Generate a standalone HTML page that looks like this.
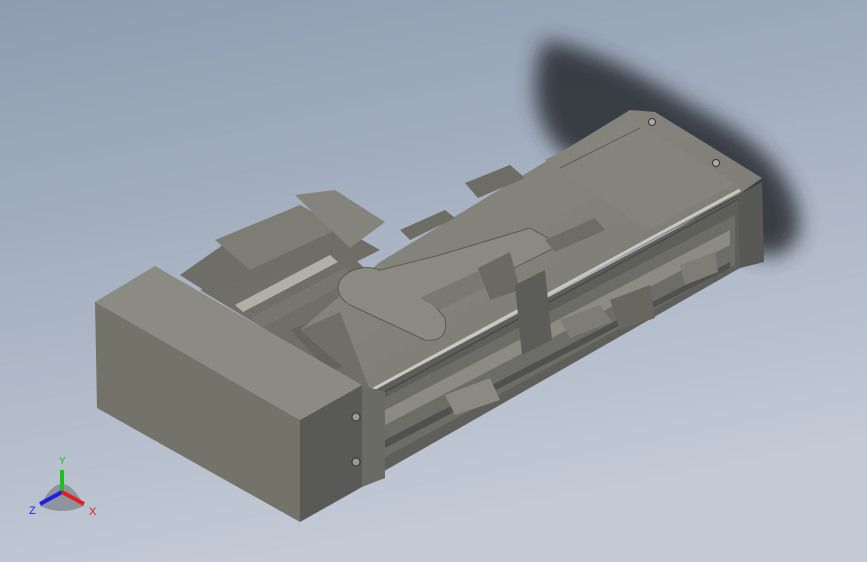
<!DOCTYPE html>
<html><head><meta charset="utf-8"><style>
html,body{margin:0;padding:0;width:867px;height:562px;overflow:hidden}
svg{display:block}
</style></head><body>
<svg width="867" height="562" viewBox="0 0 867 562" xmlns="http://www.w3.org/2000/svg">
<defs>
<linearGradient id="bg" x1="0" y1="0" x2="0.3" y2="1">
<stop offset="0" stop-color="#8d9cb0"/><stop offset="1" stop-color="#c3cad6"/>
</linearGradient>
<filter id="blur"><feGaussianBlur stdDeviation="10"/></filter>
<linearGradient id="top" x1="0" y1="0" x2="1" y2="1">
<stop offset="0" stop-color="#8a8981"/><stop offset="1" stop-color="#7a7971"/>
</linearGradient>
</defs>
<rect width="867" height="562" fill="url(#bg)"/>
<path d="M545,40 C600,50 650,80 700,110 C760,140 800,180 800,230 C790,260 770,260 740,250 L560,150 C530,120 530,70 545,40Z" fill="#2e3137" filter="url(#blur)" opacity="0.9"/>
<polygon points="365,395 740,195 762,200 762,262 740,268 372,478" fill="#5e5e5a"/>
<polygon points="380,400 735,215 735,265 380,460" fill="#6d6d67"/>
<polygon points="385,410 730,230 730,245 385,425" fill="#8b8b84"/>
<polygon points="385,440 730,262 730,268 385,448" fill="#505050"/>
<polygon points="180,275 230,240 300,205 380,250 340,270 290,345" fill="#6e6d66"/>
<!-- recess between box and body -->
<polygon points="200,290 350,255 400,300 370,392 250,320" fill="#6f6e67"/>
<polygon points="290,330 340,310 360,360 330,372" fill="#64635d"/>
<polygon points="300,330 380,262 540,165 630,110 655,112 762,178 738,195 370,390" fill="url(#top)"/>
<polygon points="300,330 340,312 370,390" fill="#6f6e67"/>
<polygon points="545,160 630,118 735,183 648,230" fill="#85847c"/>
<polyline points="560,168 640,128" stroke="#5c5c57" stroke-width="1" fill="none"/>
<polyline points="368,392 740,190" stroke="#c8c8c0" stroke-width="3" fill="none"/>
<polyline points="370,400 740,198" stroke="#4a4a46" stroke-width="1.5" fill="none"/>
<polygon points="215,240 300,205 340,228 250,270" fill="#7e7d75"/>
<polygon points="295,195 335,190 385,222 350,248" fill="#85847c"/>
<polygon points="235,305 330,255 338,262 243,312" fill="#b0b0a8"/>
<polygon points="250,318 345,268 355,278 262,328" fill="#76756e"/>
<path d="M340,280 C350,268 365,265 380,270 L440,255 L530,228 L560,245 L480,285 L430,300 L445,318 C448,335 440,342 425,340 L350,305 C338,298 336,288 340,280Z" fill="#8b8a82" stroke="#5a5a55" stroke-width="1"/>
<polygon points="420,298 480,270 500,280 440,310" fill="#7a7971"/>
<polygon points="400,230 445,210 455,218 410,240" fill="#6d6c65"/>
<polygon points="465,183 510,165 525,178 478,198" fill="#6d6c65"/>
<polygon points="545,240 595,218 605,230 555,252" fill="#6d6c65"/>
<polygon points="478,268 510,252 520,290 490,300" fill="#6a6963"/>
<polygon points="515,285 545,270 552,340 522,355" fill="#5c5c58"/>
<polygon points="445,395 490,378 500,400 455,415" fill="#8a8982"/>
<polygon points="560,320 600,305 612,322 570,338" fill="#7d7c75"/>
<polygon points="680,265 715,252 718,272 685,285" fill="#7d7c75"/>
<polygon points="610,300 650,285 655,318 620,330" fill="#67665f"/>
<polygon points="738,195 762,182 764,262 740,268" fill="#585854"/>
<polygon points="95,302 155,266 362,385 300,420" fill="#8c8b83"/>
<polygon points="95,302 300,420 300,522 97,408" fill="#747369"/>
<polygon points="300,420 362,385 362,487 300,522" fill="#595957"/>
<polygon points="362,385 385,392 385,478 362,487" fill="#6b6b66"/>
<circle cx="356" cy="417" r="4" fill="#999" stroke="#333"/>
<circle cx="356" cy="462" r="4" fill="#999" stroke="#333"/>
<circle cx="652" cy="122" r="3.5" fill="#aaa" stroke="#333"/>
<circle cx="716" cy="163" r="3.5" fill="#aaa" stroke="#333"/>
<g transform="translate(62,492)">
<path d="M-22,14 Q0,-30 22,14 Q0,24 -22,14Z" fill="#6f747c" opacity="0.6"/>
<line x1="0" y1="0" x2="0" y2="-22" stroke="#1fbf1f" stroke-width="4"/>
<line x1="0" y1="0" x2="-22" y2="12" stroke="#2020e0" stroke-width="4"/>
<line x1="0" y1="0" x2="22" y2="12" stroke="#e02020" stroke-width="4"/>
<text x="-3" y="-28" font-family="Liberation Sans,sans-serif" font-size="10" fill="#1fbf1f">Y</text>
<text x="-33" y="22" font-family="Liberation Sans,sans-serif" font-size="11" fill="#2020e0">Z</text>
<text x="27" y="23" font-family="Liberation Sans,sans-serif" font-size="11" fill="#e02020">X</text>
</g>
</svg>
</body></html>
